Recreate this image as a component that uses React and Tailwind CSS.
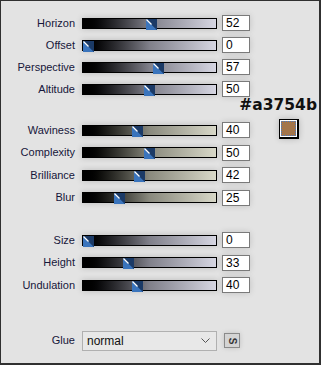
import React from "react"

const LAVENDER = "bg-gradient-to-r from-black via-[#80808a] to-[#d6d6e2]"
const BEIGE = "bg-gradient-to-r from-black via-[#8a8a7e] to-[#d8d8c8]"

const Thumb = ({ value }) => {
    const left = (value / 100) * 122
    return (
        <svg
            width="11"
            height="11"
            viewBox="0 0 11 11"
            className="absolute top-0"
            style={{ left: `${left}px` }}
        >
            <rect x="0" y="0" width="11" height="11" fill="#1f4c86" />
            <polygon points="0,0 11,11 0,11" fill="#3a74bc" />
            <polygon points="0,0 11,0 11,11" fill="#1b3a66" />
            <line x1="0.5" y1="0.5" x2="5.5" y2="5.5" stroke="#ffffff" strokeWidth="1.2" />
        </svg>
    )
}

const SliderRow = ({ label, value, tone, extra }) => (
    <div className="flex items-center h-full">
        <span className="w-[75px] pr-[1px] text-right text-[11px] leading-none text-[#16163a]">{label}</span>
        <div className="ml-[6px] w-[135px] h-[11px] border border-black shadow-[0_0_6px_rgba(0,0,0,0.18)]">
            <div className={`relative w-full h-full ${tone}`}>
                <Thumb value={value} />
            </div>
        </div>
        <div className="ml-[5px] w-[28px] h-[16px] bg-white border border-[#7a7a7a] pl-[3px] text-[12px] leading-[14px] text-black shadow-[0_0_6px_rgba(0,0,0,0.15)]">
            {value}
        </div>
        {extra}
    </div>
)

const Swatch = () => (
    <div className="self-start ml-[29px] w-[20px] h-[20px] border border-black border-r-2 border-b-2 bg-white p-[1px] shadow-[0_0_6px_rgba(0,0,0,0.2)]">
        <div className="w-full h-full bg-[#a3754b] border border-dotted border-[#4a7cc8]" />
    </div>
)

export default function App() {
    return (
        <div
            className="w-[321px] h-[365px] bg-[#e3e3e3] border border-[#303030] border-r-2 border-b-2 overflow-hidden"
            style={{ fontFamily: '"Liberation Sans", Arial, sans-serif' }}
        >
            <div className="flex flex-col pt-[11px]">
                <div className="h-[22px]"><SliderRow label="Horizon" value={52} tone={LAVENDER} /></div>
                <div className="h-[22px]"><SliderRow label="Offset" value={0} tone={LAVENDER} /></div>
                <div className="h-[22px]"><SliderRow label="Perspective" value={57} tone={LAVENDER} /></div>
                <div className="h-[22px]"><SliderRow label="Altitude" value={50} tone={LAVENDER} /></div>

                <div className="h-[19px] flex justify-end pr-[2px]">
                    <span
                        className="-mt-[3px] text-[15.5px] leading-[16px] font-bold text-[#111]"
                        style={{ fontFamily: '"DejaVu Sans", sans-serif' }}
                    >
                        #a3754b
                    </span>
                </div>

                <div className="h-[22.5px]"><SliderRow label="Waviness" value={40} tone={BEIGE} extra={<Swatch />} /></div>
                <div className="h-[22.5px]"><SliderRow label="Complexity" value={50} tone={BEIGE} /></div>
                <div className="h-[22.5px]"><SliderRow label="Brilliance" value={42} tone={BEIGE} /></div>
                <div className="h-[22.5px]"><SliderRow label="Blur" value={25} tone={BEIGE} /></div>

                <div className="h-[20px]" />

                <div className="h-[22.5px]"><SliderRow label="Size" value={0} tone={LAVENDER} /></div>
                <div className="h-[22.5px]"><SliderRow label="Height" value={33} tone={LAVENDER} /></div>
                <div className="h-[22.5px]"><SliderRow label="Undulation" value={40} tone={LAVENDER} /></div>

                <div className="mt-[34px] flex items-center h-[20px]">
                    <span className="w-[75px] pr-[1px] text-right text-[11px] leading-none text-[#16163a]">Glue</span>
                    <div className="ml-[6px] w-[135px] h-[20px] flex items-center justify-between bg-[#e8e8e8] border border-[#b0b0b0] pl-[4px] pr-[6px] text-[12px] text-[#111]">
                        <span>normal</span>
                        <svg width="9" height="6" viewBox="0 0 9 6">
                            <polyline points="0.5,0.5 4.5,4.5 8.5,0.5" fill="none" stroke="#555" strokeWidth="1" />
                        </svg>
                    </div>
                    <div className="ml-[7px] w-[16px] h-[15px] flex items-center justify-center bg-[#d4d4d4] border border-[#8a8a8a] shadow-[0_0_5px_rgba(0,0,0,0.15)]">
                        <span className="rotate-90 text-[10px] leading-none font-bold text-[#333]">S</span>
                    </div>
                </div>
            </div>
        </div>
    )
}
